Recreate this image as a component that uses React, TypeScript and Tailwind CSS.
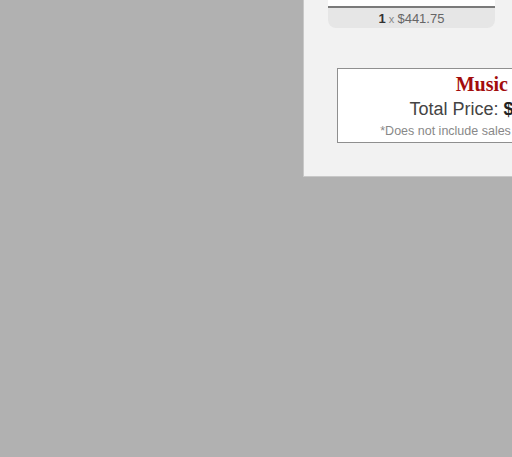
export default function App() {
  return (
    <div className="h-[457px] w-[512px] overflow-hidden bg-[#b1b1b1] font-['Liberation_Sans',Arial,sans-serif]">
      <div className="ml-[303px] w-[420px] border-b border-l border-[#c8c8c8] bg-[#f2f2f2] pb-[33px] pl-6">
        {/* last item card, scrolled mostly out of view */}
        <div className="w-[167px] overflow-hidden rounded-b-lg bg-[#e6e6e6]">
          <div className="h-[8px] border-b-2 border-[#7a7a7a] bg-white" />
          <div className="h-[20px] pt-px text-center text-[13px] leading-[20px] text-[#666]">
            <span className="font-bold text-[#333]">1</span>
            <span className="text-[11px] text-[#888]"> x </span>
            $441.75
          </div>
        </div>

        <div className="ml-[9px] mt-10 w-[338px] border border-[#8f8f8f] bg-white pb-[1px] pt-[2px] text-center">
          <div className="font-['Liberation_Serif',serif] text-[20px] font-bold leading-[26px] text-[#a30d0d]">
            Music Total
          </div>
          <div className="text-[18px] leading-[24px] text-[#444]">
            Total Price: <span className="font-bold text-[#222]">$110,441.75</span>
          </div>
          <div className="text-[12.5px] leading-[20px] text-[#888]">
            *Does not include sales tax or shipping costs.
          </div>
        </div>
      </div>
    </div>
  );
}
